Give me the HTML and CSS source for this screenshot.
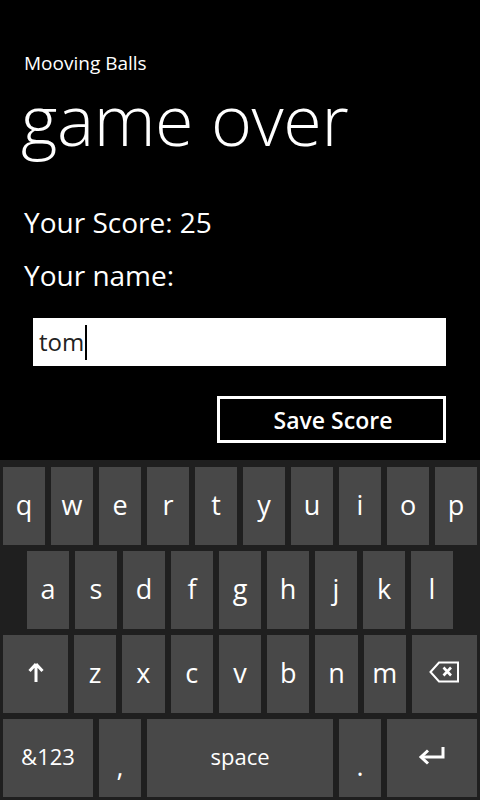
FILE: index.html
```html
<!DOCTYPE html>
<html>
<head>
<meta charset="utf-8">
<link rel="stylesheet" href="styles.css">
</head>
<body>
<div class="page">
  <div class="content">
    <div class="app-title">Mooving Balls</div>
    <div class="page-title">game over</div>
    <div class="label score">Your Score: 25</div>
    <div class="label name">Your name:</div>
    <div class="textbox"><span class="typed">tom</span><span class="caret"></span></div>
    <div class="btn-row"><div class="button">Save Score</div></div>
  </div>
  <div class="keyboard">
    <div class="row">
      <div class="key">q</div><div class="key">w</div><div class="key">e</div><div class="key">r</div><div class="key">t</div><div class="key">y</div><div class="key">u</div><div class="key">i</div><div class="key">o</div><div class="key">p</div>
    </div>
    <div class="row row2">
      <div class="key">a</div><div class="key">s</div><div class="key">d</div><div class="key">f</div><div class="key">g</div><div class="key">h</div><div class="key">j</div><div class="key">k</div><div class="key">l</div>
    </div>
    <div class="row">
      <div class="key wide65">
        <svg width="18" height="22" viewBox="0 0 18 22"><path d="M9 3 L2.5 10 M9 3 L15.5 10 M9 3 V21" stroke="#fff" stroke-width="3" fill="none" stroke-linecap="butt"/></svg>
      </div>
      <div class="key">z</div><div class="key">x</div><div class="key">c</div><div class="key">v</div><div class="key">b</div><div class="key">n</div><div class="key">m</div>
      <div class="key wide65">
        <svg width="31" height="24" viewBox="0 0 31 24"><path d="M1.5 12 L10 2.5 H29 V21.5 H10 Z" stroke="#fff" stroke-width="2" fill="none" stroke-linejoin="miter"/><path d="M14.5 7.5 L22 15.5 M22 7.5 L14.5 15.5" stroke="#fff" stroke-width="2.6" fill="none"/></svg>
      </div>
    </div>
    <div class="row">
      <div class="key wide90 small">&amp;123</div>
      <div class="key punct">,</div>
      <div class="key space small">space</div>
      <div class="key punct">.</div>
      <div class="key wide90">
        <svg width="28" height="18" viewBox="0 0 28 18"><path d="M25 0 V10 H4" stroke="#fff" stroke-width="3" fill="none"/><path d="M10 3.5 L3 10 L10 16.5" stroke="#fff" stroke-width="3" fill="none"/></svg>
      </div>
    </div>
  </div>
</div>
</body>
</html>
```

FILE: styles.css
```css
html, body {
  margin: 0;
  padding: 0;
  background: #000;
}
body {
  width: 480px;
  height: 800px;
  overflow: hidden;
  font-family: "Open Sans", "Noto Sans", sans-serif;
  color: #fff;
}
.page {
  display: flex;
  flex-direction: column;
  height: 800px;
}
.content {
  height: 460px;
  padding: 0 0 0 24px;
  box-sizing: border-box;
}
.app-title {
  margin-top: 52px;
  font-size: 19px;
  line-height: 22px;
  font-weight: 500;
}
.page-title {
  margin-top: 11px;
  margin-left: -3px;
  font-size: 70px;
  line-height: 68px;
  font-weight: 300;
  letter-spacing: -0.4px;
}
.label {
  font-size: 28px;
  line-height: 36px;
  font-weight: 400;
}
.score {
  margin-top: 51px;
}
.name {
  margin-top: 17px;
}
.textbox {
  margin: 25px 0 0 9px;
  width: 413px;
  height: 48px;
  background: #fff;
  color: #222;
  display: flex;
  align-items: center;
  padding-left: 6px;
  box-sizing: border-box;
  font-size: 24px;
}
.typed {
  line-height: 1;
}
.caret {
  width: 2px;
  height: 35px;
  background: #000;
  margin-left: 1px;
}
.btn-row {
  display: flex;
  justify-content: flex-end;
  margin-top: 30px;
  width: 422px;
}
.button {
  width: 229px;
  height: 47px;
  border: 3px solid #fff;
  box-sizing: border-box;
  display: flex;
  align-items: center;
  justify-content: center;
  font-size: 23px;
  font-weight: 600;
  padding-left: 3px;
}
.keyboard {
  height: 340px;
  background: #1f1f1f;
  padding: 7px 3px 3px;
  box-sizing: border-box;
  display: flex;
  flex-direction: column;
  gap: 6px;
}
.row {
  display: flex;
  gap: 6px;
  height: 78px;
}
.row2 {
  padding: 0 24px;
}
.key {
  flex: 1 1 0;
  background: #484848;
  display: flex;
  align-items: center;
  justify-content: center;
  font-size: 27px;
  line-height: 1;
  padding-bottom: 4px;
  box-sizing: border-box;
  color: #fff;
}
.wide65 {
  flex: 0 0 65px;
}
.wide90 {
  flex: 0 0 90px;
}
.space {
  flex: 0 0 186px;
}
.punct {
  flex: 0 0 42px;
  padding-top: 14px;
  padding-bottom: 0;
}
.small {
  font-size: 22px;
}
```
